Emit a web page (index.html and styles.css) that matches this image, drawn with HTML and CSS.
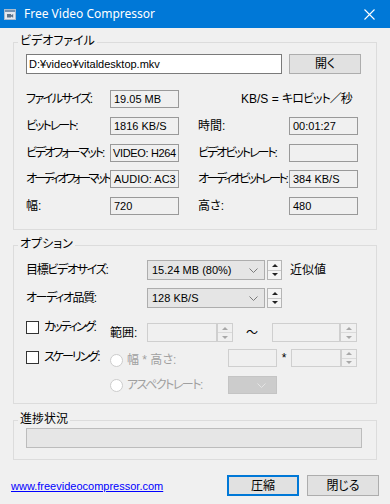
FILE: index.html
```html
<!DOCTYPE html>
<html lang="ja">
<head>
<meta charset="utf-8">
<title>Free Video Compressor</title>
<link rel="stylesheet" href="styles.css">
</head>
<body>
<div class="window">
  <div class="titlebar">
    <svg class="app-icon" width="12" height="11" viewBox="0 0 12 11">
      <rect x="0.5" y="0.5" width="11" height="10" fill="#e3e9f0" stroke="#a9bccf"/>
      <rect x="1" y="1" width="10" height="2" fill="#7592b0"/>
      <rect x="3" y="5" width="4" height="3.5" fill="#5d7389"/>
      <path d="M7 6.2 L9.2 5 V8.7 L7 7.5Z" fill="#5d7389"/>
    </svg>
    <span class="title">Free Video Compressor</span>
    <svg class="close" width="11" height="11" viewBox="0 0 11 11">
      <path d="M0.5 0.5 L10.5 10.5 M10.5 0.5 L0.5 10.5" stroke="#fff" stroke-width="1.1" fill="none"/>
    </svg>
  </div>

  <div class="client">
    <section class="group g-video">
      <div class="group-title">ビデオファイル</div>
      <div class="path-row">
        <div class="textbox path lat">D:¥video¥vitaldesktop.mkv</div>
        <div class="btn btn-open">開く</div>
      </div>
      <div class="info-grid">
        <span class="lbl ls15">ファイルサイズ:</span><span class="ro lat">19.05 MB</span>
        <span class="note">KB/S = <span class="ls1">キロビット／秒</span></span>

        <span class="lbl ls2">ビットレート:</span><span class="ro lat">1816 KB/S</span>
        <span class="lbl right">時間:</span><span class="ro lat">00:01:27</span>

        <span class="lbl ls2">ビデオフォーマット:</span><span class="ro lat tight">VIDEO: H264</span>
        <span class="lbl right ls2">ビデオビットレート:</span><span class="ro lat"></span>

        <span class="lbl ls28">オーディオフォーマット:</span><span class="ro lat">AUDIO: AC3</span>
        <span class="lbl right ls25">オーディオビットレート:</span><span class="ro lat">384 KB/S</span>

        <span class="lbl">幅:</span><span class="ro lat">720</span>
        <span class="lbl right">高さ:</span><span class="ro lat">480</span>
      </div>
    </section>

    <section class="group g-options">
      <div class="group-title">オプション</div>

      <div class="opt-row row-size">
        <span class="opt-lbl ls13">目標ビデオサイズ:</span>
        <div class="combo"><span class="combo-text lat">15.24 MB (80%)</span><svg class="chev" width="9" height="5" viewBox="0 0 9 5"><path d="M0.5 0.5 L4.5 4.5 L8.5 0.5" stroke="#7a7a7a" fill="none"/></svg></div>
        <div class="spin"><span class="up"></span><span class="dn"></span></div>
        <span class="approx">近似値</span>
      </div>

      <div class="opt-row row-audio">
        <span class="opt-lbl ls14">オーディオ品質:</span>
        <div class="combo"><span class="combo-text lat">128 KB/S</span><svg class="chev" width="9" height="5" viewBox="0 0 9 5"><path d="M0.5 0.5 L4.5 4.5 L8.5 0.5" stroke="#7a7a7a" fill="none"/></svg></div>
        <div class="spin"><span class="up"></span><span class="dn"></span></div>
      </div>

      <div class="opt-row row-cut">
        <div class="check-unit"><span class="checkbox"></span><span class="ls2">カッティング:</span></div>
        <div class="range-unit">
          <span class="range-lbl">範囲:</span>
          <div class="dis-input w70"></div>
          <div class="spin dis w16"><span class="up"></span><span class="dn"></span></div>
          <span class="tilde">～</span>
          <div class="dis-input w68"></div>
          <div class="spin dis w17"><span class="up"></span><span class="dn"></span></div>
        </div>
      </div>

      <div class="opt-row row-scale">
        <div class="check-unit"><span class="checkbox"></span><span class="ls2">スケーリング:</span></div>
        <div class="radio-unit"><span class="radio"></span><span class="dis-text">幅 * 高さ:</span></div>
        <div class="dis-input w49 h18"></div>
        <span class="star">*</span>
        <div class="dis-input w50 h18"></div>
        <div class="spin dis w16 h18"><span class="up"></span><span class="dn"></span></div>
      </div>

      <div class="opt-row row-aspect">
        <div class="radio-unit"><span class="radio"></span><span class="dis-text ls15">アスペクトレート:</span></div>
        <div class="dis-combo"><svg class="chev" width="9" height="5" viewBox="0 0 9 5"><path d="M0.5 0.5 L4.5 4.5 L8.5 0.5" stroke="#e4e4e4" fill="none"/></svg></div>
      </div>
    </section>

    <section class="group g-progress">
      <div class="group-title">進捗状況</div>
      <div class="progress"></div>
    </section>

    <div class="footer">
      <a class="link lat" href="#">www.freevideocompressor.com</a>
      <div class="buttons">
        <div class="btn btn-default">圧縮</div>
        <div class="btn">閉じる</div>
      </div>
    </div>
  </div>
</div>
</body>
</html>
```

FILE: styles.css
```css
* { box-sizing: border-box; }

html, body {
  margin: 0;
  padding: 0;
  background: #f0f0f0;
}

body {
  font-family: "Liberation Sans", "Noto Sans CJK JP", sans-serif;
  font-size: 12px;
  line-height: 14px;
  color: #000;
  font-feature-settings: "palt";
}

.lat {
  font-family: "Liberation Sans", "Noto Sans CJK JP", sans-serif;
  font-size: 11px;
  font-feature-settings: normal;
}

.ls05 { letter-spacing: -0.5px; }
.ls1 { letter-spacing: -1px; }
.ls13 { letter-spacing: -1.3px; }
.ls14 { letter-spacing: -1.4px; }
.ls15 { letter-spacing: -1.5px; }
.ls2 { letter-spacing: -2px; }
.ls25 { letter-spacing: -2.5px; }
.ls28 { letter-spacing: -2.8px; }

.window {
  width: 390px;
  height: 504px;
  background: #f0f0f0;
  overflow: hidden;
}

/* title bar */
.titlebar {
  height: 28px;
  background: #0078d7;
  display: flex;
  align-items: center;
  color: #fff;
}
.app-icon {
  margin-left: 4px;
  flex: none;
}
.title {
  margin-left: 8px;
  font-family: "Noto Sans", "Open Sans", sans-serif;
  font-size: 12px;
  font-feature-settings: normal;
  flex: 1;
}
.close {
  margin-right: 15px;
  flex: none;
}

/* client */
.client {
  padding: 14px 13px 0 13px;
}

.group {
  border: 1px solid #dcdcdc;
  padding: 0 12px;
}
.group-title {
  display: table;
  margin: -9px 0 0 -8px;
  padding: 0 2px;
  background: #f0f0f0;
  line-height: 14px;
}

.g-video {
  height: 188px;
}
.g-options {
  margin-top: 15px;
  height: 159px;
}
.g-progress {
  margin-top: 16px;
  height: 40px;
}

/* video group */
.path-row {
  margin-top: 6px;
  display: flex;
  align-items: center;
}
.textbox {
  height: 20px;
  border: 1px solid #7a7a7a;
  background: #fff;
  padding: 0 2px;
  line-height: 18px;
  white-space: nowrap;
  overflow: hidden;
}
.path {
  width: 256px;
}
.btn {
  width: 72px;
  height: 21px;
  border: 1px solid #adadad;
  background: #e1e1e1;
  display: flex;
  align-items: center;
  justify-content: center;
}
.btn-open {
  margin-left: 7px;
  height: 20px;
}

.info-grid {
  margin-top: 16px;
  display: grid;
  grid-template-columns: 84px 69px 19px 91px 69px;
  grid-auto-rows: 18px;
  row-gap: 8.75px;
  align-items: center;
}
.lbl {
  white-space: nowrap;
}
.lbl.right {
  grid-column: 4;
}
.ro {
  height: 18px;
  border: 1px solid #999;
  background: #f0f0f0;
  padding: 0 3px;
  line-height: 16px;
  white-space: nowrap;
  overflow: hidden;
}
.ro.tight {
  padding: 0 1px 0 2px;
  letter-spacing: -0.35px;
}
.note {
  grid-column: 3 / 6;
  padding-left: 62px;
  white-space: nowrap;
}

/* options group */
.opt-row {
  display: flex;
  align-items: center;
}
.row-size { margin-top: 9px; }
.row-audio { margin-top: 8px; }
.opt-lbl {
  width: 121px;
  white-space: nowrap;
}
.combo {
  width: 118px;
  height: 20px;
  border: 1px solid #adadad;
  background: #e5e5e5;
  display: flex;
  align-items: center;
  padding: 0 6px 0 4px;
}
.combo-text {
  flex: 1;
  white-space: nowrap;
}
.chev { flex: none; }

.spin {
  width: 15px;
  height: 20px;
  margin-left: 2px;
  border: 1px solid #b5b5b5;
  background: #f4f4f4;
  display: flex;
  flex-direction: column;
}
.spin .up, .spin .dn {
  flex: 1;
  display: flex;
  align-items: center;
  justify-content: center;
}
.spin .up {
  border-bottom: 1px solid #c8c8c8;
}
.spin .up::before {
  content: "";
  border-left: 3px solid transparent;
  border-right: 3px solid transparent;
  border-bottom: 3px solid #222;
}
.spin .dn::before {
  content: "";
  border-left: 3px solid transparent;
  border-right: 3px solid transparent;
  border-top: 3px solid #222;
}
.spin.dis {
  margin-left: 0;
  border-color: #cfcfcf;
  background: #f0f0f0;
}
.spin.dis .up { border-bottom-color: #dadada; }
.spin.dis .up::before { border-bottom-color: #a8a8a8; }
.spin.dis .dn::before { border-top-color: #a8a8a8; }

.approx {
  margin-left: 8px;
}

.row-cut {
  margin-top: 12px;
  align-items: flex-start;
}
.check-unit {
  width: 84px;
  display: flex;
  align-items: center;
  white-space: nowrap;
}
.checkbox {
  width: 13px;
  height: 13px;
  border: 1px solid #333;
  background: #fff;
  margin-right: 5px;
  flex: none;
}
.range-unit {
  margin-top: 3px;
  display: flex;
  align-items: center;
}
.range-lbl {
  width: 37px;
}
.dis-input {
  height: 19px;
  border: 1px solid #cfcfcf;
  background: #f0f0f0;
}
.spin.w16 { width: 16px; height: 19px; }
.spin.w17 { width: 17px; height: 19px; }
.w70 { width: 70px; }
.w68 { width: 68px; }
.w49 { width: 49px; }
.w50 { width: 50px; }
.dis-input.h18, .spin.h18 { height: 18px; }
.tilde {
  margin: 0 14px 0 13px;
  width: 12px;
}

.row-scale {
  margin-top: 7px;
  align-items: flex-start;
}
.row-scale .check-unit { margin-top: 1px; }
.row-scale .radio-unit { margin-top: 4px; }
.radio-unit {
  width: 118px;
  display: flex;
  align-items: center;
  white-space: nowrap;
}
.radio {
  width: 13px;
  height: 13px;
  border: 1px solid #cccccc;
  border-radius: 50%;
  background: #fff;
  margin-right: 4px;
  flex: none;
}
.dis-text {
  color: #a0a0a0;
}
.star {
  width: 14px;
  text-align: center;
  margin: 2px 0 0 0;
}
.row-scale .spin { margin-left: 0; }

.row-aspect {
  margin-top: 9px;
  padding-left: 84px;
}
.dis-combo {
  width: 49px;
  height: 18px;
  border: 1px solid #c4c4c4;
  background: #cccccc;
  display: flex;
  align-items: center;
  justify-content: flex-end;
  padding-right: 10px;
}

/* progress */
.progress {
  margin-top: 2px;
  height: 20px;
  width: 336px;
  border: 1px solid #bcbcbc;
  background: #e6e6e6;
}

/* footer */
.footer {
  margin: 15px -2px 0 -2px;
  display: flex;
  align-items: center;
  justify-content: space-between;
}
.link {
  color: #0000ff;
  text-decoration: underline;
  margin-top: 1px;
}
.buttons {
  display: flex;
  gap: 8px;
}
.btn-default {
  border: 2px solid #0078d7;
}
```
